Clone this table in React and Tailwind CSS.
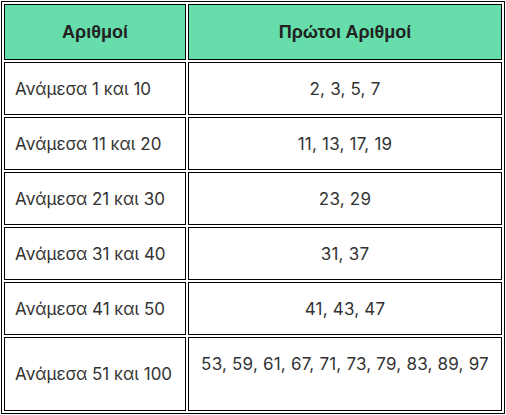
const rows = [
  ["Ανάμεσα 1 και 10", "2, 3, 5, 7"],
  ["Ανάμεσα 11 και 20", "11, 13, 17, 19"],
  ["Ανάμεσα 21 και 30", "23, 29"],
  ["Ανάμεσα 31 και 40", "31, 37"],
  ["Ανάμεσα 41 και 50", "41, 43, 47"],
];

export default function App() {
  return (
    <div className="bg-white w-[506px] h-[415px] pt-px pl-px">
      <table className="table-fixed w-[504px] border border-black border-separate border-spacing-[2px] text-[#333] font-['Inter',sans-serif] text-[17px]">
        <colgroup>
          <col className="w-[182px]" />
          <col className="w-[314px]" />
        </colgroup>
        <thead>
          <tr>
            <th className="h-[56px] border border-black bg-[#66ddaa] text-center font-bold text-[#222] font-['Liberation_Sans',sans-serif] text-[18px]">
              Αριθμοί
            </th>
            <th className="h-[56px] border border-black bg-[#66ddaa] text-center font-bold text-[#222] font-['Liberation_Sans',sans-serif] text-[18px]">
              Πρώτοι Αριθμοί
            </th>
          </tr>
        </thead>
        <tbody>
          {rows.map(([range, primes]) => (
            <tr key={range}>
              <td className="h-[53px] border border-black px-[10px] align-middle leading-6">
                {range}
              </td>
              <td className="h-[53px] border border-black px-[10px] text-center align-middle leading-6 tracking-[0.2px]">
                {primes}
              </td>
            </tr>
          ))}
          <tr>
            <td className="h-[74px] border border-black px-[10px] align-middle leading-6">
              Ανάμεσα 51 και 100
            </td>
            <td className="h-[74px] border border-black px-[6px] pt-[14px] text-center align-top leading-6 whitespace-nowrap tracking-[0.2px]">
              53, 59, 61, 67, 71, 73, 79, 83, 89, 97
            </td>
          </tr>
        </tbody>
      </table>
    </div>
  );
}
